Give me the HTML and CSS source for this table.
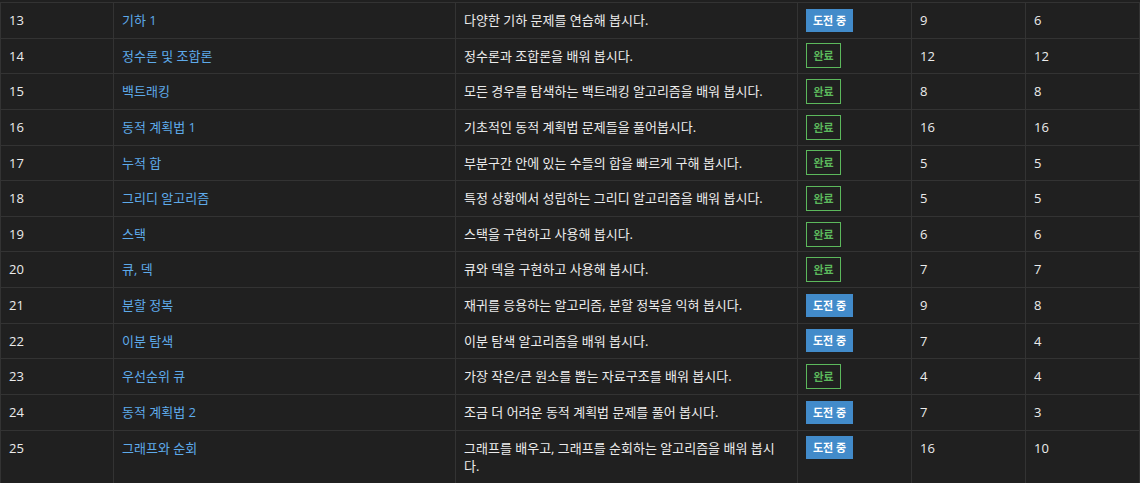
FILE: index.html
```html
<!DOCTYPE html>
<html lang="ko">
<head>
<meta charset="utf-8">
<title>단계별로 풀어보기</title>
<link rel="stylesheet" href="styles.css">
</head>
<body>
<div class="wrap">
<table class="steps">
<colgroup>
<col class="c-num"><col class="c-title"><col class="c-desc"><col class="c-state"><col class="c-cnt"><col class="c-cnt">
</colgroup>
<tbody>
<tr><td>13</td><td class="title"><a href="#">기하 1</a></td><td class="desc">다양한 기하 문제를 연습해 봅시다.</td><td><span class="badge doing">도전 중</span></td><td>9</td><td>6</td></tr>
<tr><td>14</td><td class="title"><a href="#">정수론 및 조합론</a></td><td class="desc">정수론과 조합론을 배워 봅시다.</td><td><span class="badge done">완료</span></td><td>12</td><td>12</td></tr>
<tr><td>15</td><td class="title"><a href="#">백트래킹</a></td><td class="desc">모든 경우를 탐색하는 백트래킹 알고리즘을 배워 봅시다.</td><td><span class="badge done">완료</span></td><td>8</td><td>8</td></tr>
<tr><td>16</td><td class="title"><a href="#">동적 계획법 1</a></td><td class="desc">기초적인 동적 계획법 문제들을 풀어봅시다.</td><td><span class="badge done">완료</span></td><td>16</td><td>16</td></tr>
<tr><td>17</td><td class="title"><a href="#">누적 합</a></td><td class="desc">부분구간 안에 있는 수들의 합을 빠르게 구해 봅시다.</td><td><span class="badge done">완료</span></td><td>5</td><td>5</td></tr>
<tr><td>18</td><td class="title"><a href="#">그리디 알고리즘</a></td><td class="desc">특정 상황에서 성립하는 그리디 알고리즘을 배워 봅시다.</td><td><span class="badge done">완료</span></td><td>5</td><td>5</td></tr>
<tr><td>19</td><td class="title"><a href="#">스택</a></td><td class="desc">스택을 구현하고 사용해 봅시다.</td><td><span class="badge done">완료</span></td><td>6</td><td>6</td></tr>
<tr><td>20</td><td class="title"><a href="#">큐, 덱</a></td><td class="desc">큐와 덱을 구현하고 사용해 봅시다.</td><td><span class="badge done">완료</span></td><td>7</td><td>7</td></tr>
<tr><td>21</td><td class="title"><a href="#">분할 정복</a></td><td class="desc">재귀를 응용하는 알고리즘, 분할 정복을 익혀 봅시다.</td><td><span class="badge doing">도전 중</span></td><td>9</td><td>8</td></tr>
<tr><td>22</td><td class="title"><a href="#">이분 탐색</a></td><td class="desc">이분 탐색 알고리즘을 배워 봅시다.</td><td><span class="badge doing">도전 중</span></td><td>7</td><td>4</td></tr>
<tr><td>23</td><td class="title"><a href="#">우선순위 큐</a></td><td class="desc">가장 작은/큰 원소를 뽑는 자료구조를 배워 봅시다.</td><td><span class="badge done">완료</span></td><td>4</td><td>4</td></tr>
<tr><td>24</td><td class="title"><a href="#">동적 계획법 2</a></td><td class="desc">조금 더 어려운 동적 계획법 문제를 풀어 봅시다.</td><td><span class="badge doing">도전 중</span></td><td>7</td><td>3</td></tr>
<tr><td>25</td><td class="title"><a href="#">그래프와 순회</a></td><td class="desc">그래프를 배우고, 그래프를 순회하는 알고리즘을 배워 봅시다.</td><td><span class="badge doing">도전 중</span></td><td>16</td><td>10</td></tr>
</tbody>
</table>
</div>
</body>
</html>
```
FILE: styles.css
```css
html, body {
  margin: 0;
  padding: 0;
  background: #202020;
  overflow: hidden;
}
.wrap {
  padding-top: 2px;
}
.steps {
  width: 1140px;
  border-collapse: collapse;
  table-layout: fixed;
  font-family: "Open Sans", "Noto Sans CJK KR", sans-serif;
  font-size: 13px;
  line-height: 18.57px;
  color: #ececec;
  border-left: 1px solid #333;
  border-right: 1px solid #333;
}
.c-num { width: 113px; }
.c-title { width: 342px; }
.c-desc { width: 342px; }
.c-state { width: 114px; }
.c-cnt { width: 114px; }
.steps td {
  padding: 8px;
  border: 1px solid #333;
  vertical-align: top;
  text-align: left;
}
.steps td.desc {
  padding-right: 12px;
}
.steps a {
  color: #5eaaea;
  text-decoration: none;
}
.badge {
  display: inline-block;
  vertical-align: top;
  font-family: "Open Sans", "Noto Sans CJK KR", sans-serif;
  font-size: 11px;
  font-weight: bold;
  text-align: center;
  box-sizing: border-box;
}
.badge.doing {
  height: 23px;
  line-height: 23px;
  margin: -2.2px 0;
  padding: 0 7px;
  background: #428bca;
  color: #fff;
}
.badge.done {
  height: 25px;
  line-height: 23px;
  margin: -3.2px 0;
  padding: 0 6.5px;
  border: 1px solid #5cb85c;
  color: #5cb85c;
}
```
